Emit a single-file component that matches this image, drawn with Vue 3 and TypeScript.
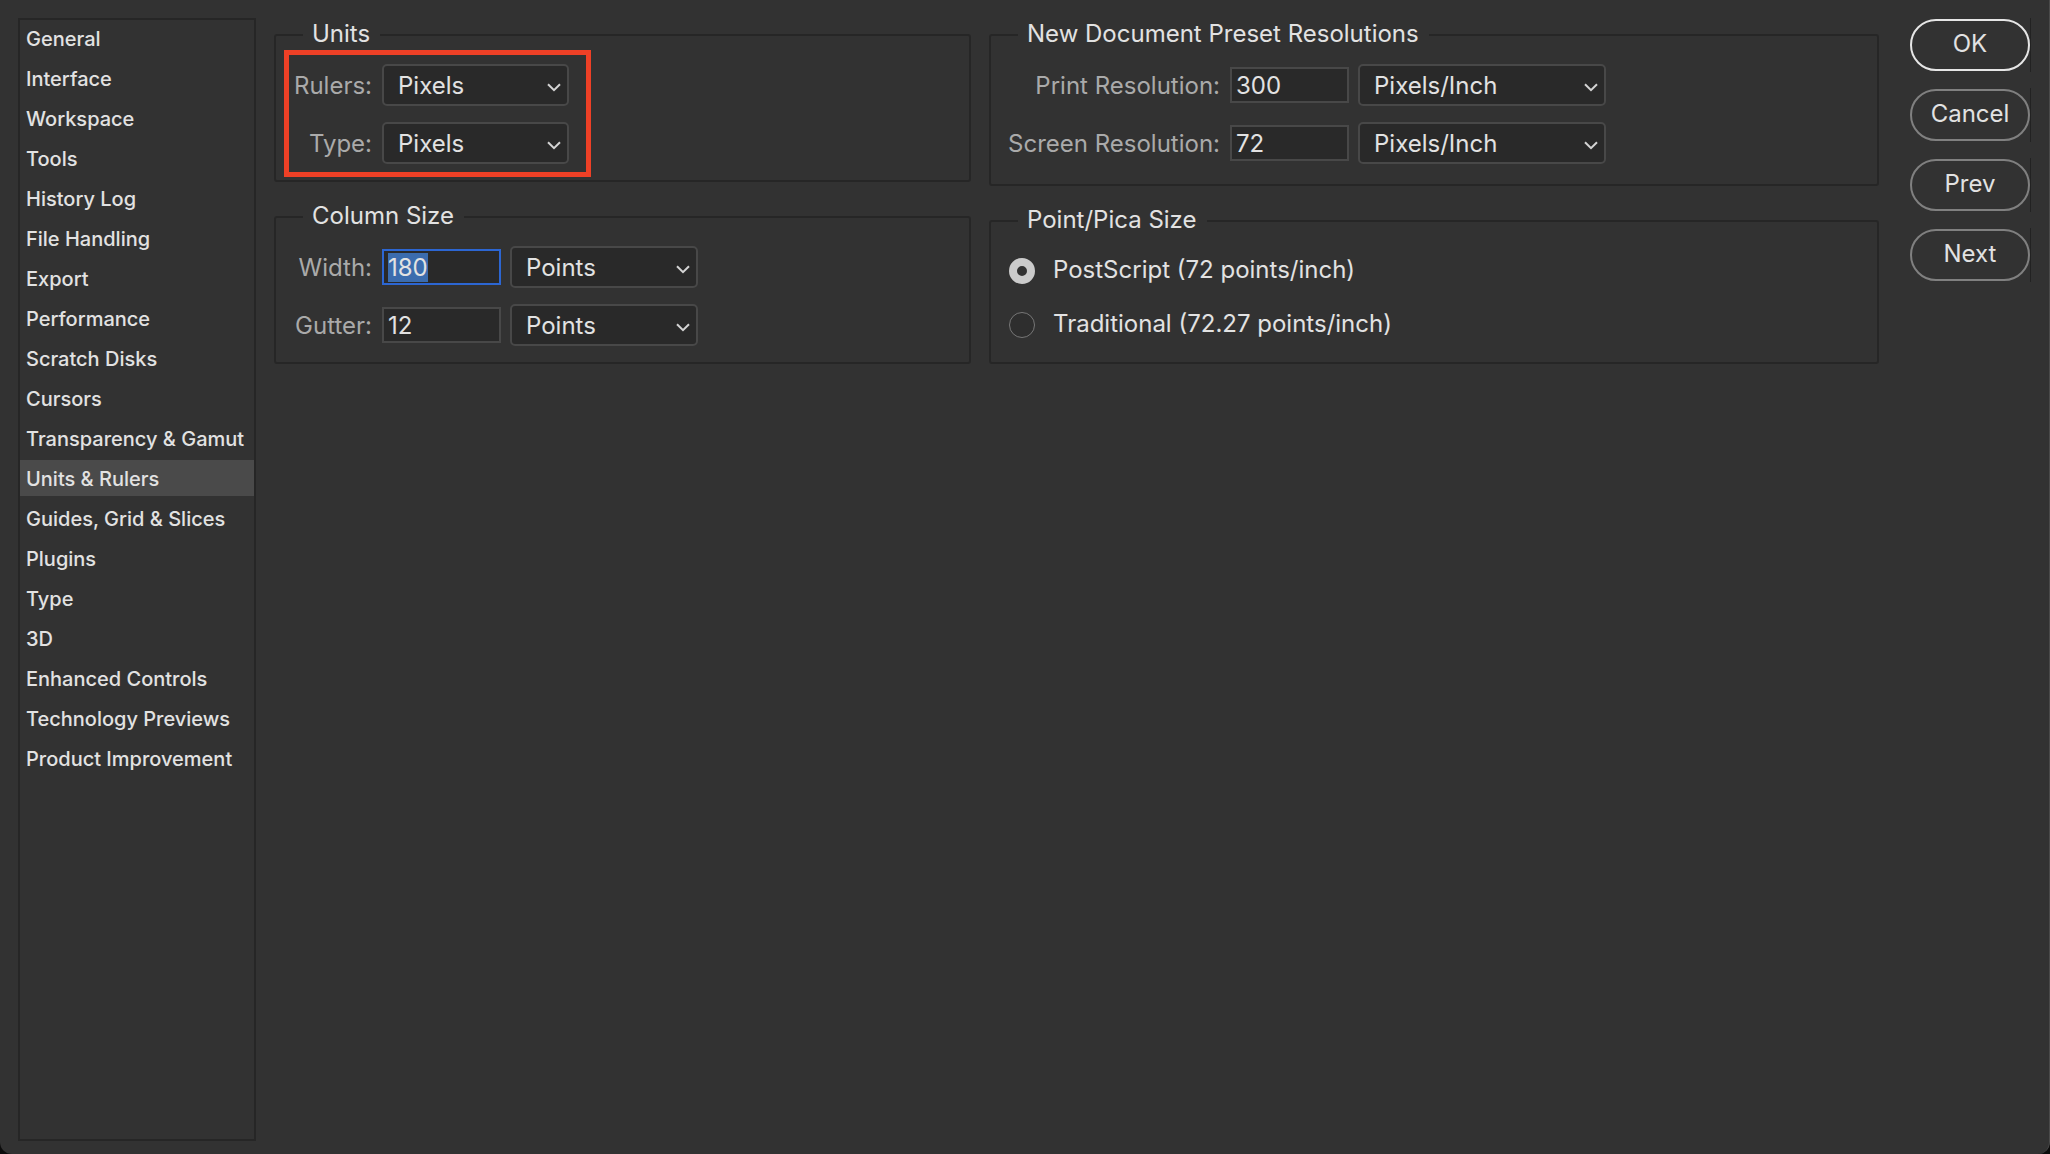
<script setup lang="ts">
import { onMounted, ref } from 'vue'

interface UnitField {
  id: string
  label: string
  value?: string
  unit: string
  options: string[]
}

const sections: string[] = [
  'General',
  'Interface',
  'Workspace',
  'Tools',
  'History Log',
  'File Handling',
  'Export',
  'Performance',
  'Scratch Disks',
  'Cursors',
  'Transparency & Gamut',
  'Units & Rulers',
  'Guides, Grid & Slices',
  'Plugins',
  'Type',
  '3D',
  'Enhanced Controls',
  'Technology Previews',
  'Product Improvement',
]
const activeSection = ref('Units & Rulers')

const lengths = ['Pixels', 'Inches', 'Points', 'Picas']
const densities = ['Pixels/Inch', 'Pixels/cm']

const units = ref<UnitField[]>([
  { id: 'rulers', label: 'Rulers:', unit: 'Pixels', options: lengths },
  { id: 'type', label: 'Type:', unit: 'Pixels', options: lengths },
])
const columns = ref<UnitField[]>([
  { id: 'width', label: 'Width:', value: '180', unit: 'Points', options: lengths },
  { id: 'gutter', label: 'Gutter:', value: '12', unit: 'Points', options: lengths },
])
const resolutions = ref<UnitField[]>([
  { id: 'print', label: 'Print Resolution:', value: '300', unit: 'Pixels/Inch', options: densities },
  { id: 'screen', label: 'Screen Resolution:', value: '72', unit: 'Pixels/Inch', options: densities },
])

const picaSizes = [
  { value: 'postscript', label: 'PostScript (72 points/inch)' },
  { value: 'traditional', label: 'Traditional (72.27 points/inch)' },
]
const pica = ref('postscript')

const actions = ['OK', 'Cancel', 'Prev', 'Next']

const form = ref<HTMLElement | null>(null)
onMounted(() => {
  const first = form.value?.querySelector<HTMLInputElement>('#width')
  first?.focus()
  first?.select()
})
</script>

<template>
  <div class="dialog">
    <nav class="sidebar">
      <a
        v-for="s in sections"
        :key="s"
        href="#"
        class="section"
        :class="{ active: s === activeSection }"
        @click.prevent="activeSection = s"
        >{{ s }}</a
      >
    </nav>

    <main ref="form" class="panels">
      <div class="column">
        <fieldset class="group units">
          <legend>Units</legend>
          <div class="rows">
            <div v-for="f in units" :key="f.id" class="row">
              <label class="name" :for="f.id">{{ f.label }}</label>
              <span class="picker">
                <select :id="f.id" v-model="f.unit">
                  <option v-for="o in f.options" :key="o">{{ o }}</option>
                </select>
                <svg class="chevron" viewBox="0 0 14 9"><path d="M1 1.2 7 7.2 13 1.2" /></svg>
              </span>
            </div>
          </div>
          <div class="highlight"></div>
        </fieldset>

        <fieldset class="group">
          <legend>Column Size</legend>
          <div class="rows">
            <div v-for="f in columns" :key="f.id" class="row">
              <label class="name" :for="f.id">{{ f.label }}</label>
              <input :id="f.id" v-model="f.value" class="number" type="text" />
              <span class="picker">
                <select v-model="f.unit" :aria-label="f.label">
                  <option v-for="o in f.options" :key="o">{{ o }}</option>
                </select>
                <svg class="chevron" viewBox="0 0 14 9"><path d="M1 1.2 7 7.2 13 1.2" /></svg>
              </span>
            </div>
          </div>
        </fieldset>
      </div>

      <div class="column">
        <fieldset class="group wide">
          <legend>New Document Preset Resolutions</legend>
          <div class="rows">
            <div v-for="f in resolutions" :key="f.id" class="row">
              <label class="name" :for="f.id">{{ f.label }}</label>
              <input :id="f.id" v-model="f.value" class="number" type="text" />
              <span class="picker">
                <select v-model="f.unit" :aria-label="f.label">
                  <option v-for="o in f.options" :key="o">{{ o }}</option>
                </select>
                <svg class="chevron" viewBox="0 0 14 9"><path d="M1 1.2 7 7.2 13 1.2" /></svg>
              </span>
            </div>
          </div>
        </fieldset>

        <fieldset class="group">
          <legend>Point/Pica Size</legend>
          <div class="choices">
            <label v-for="p in picaSizes" :key="p.value" class="choice">
              <input v-model="pica" type="radio" name="pica" :value="p.value" />
              <span>{{ p.label }}</span>
            </label>
          </div>
        </fieldset>
      </div>
    </main>

    <div class="actions">
      <div v-for="a in actions" :key="a" class="slot">
        <button type="button" :class="{ primary: a === 'OK' }">{{ a }}</button>
      </div>
    </div>
  </div>
</template>

<style>
html,
body {
  background: #0c0c0c;
}
</style>

<style scoped>
.dialog,
.dialog * {
  box-sizing: border-box;
}
.dialog {
  display: flex;
  min-height: 100vh;
  padding: 18px 18px 13px;
  background: #323232;
  border-right: 1px solid #4a4a4a;
  border-radius: 0 0 12px 12px;
  color: #e2e2e2;
  font-family: Inter, 'Liberation Sans', sans-serif;
  font-size: 24px;
  line-height: 32px;
}

.sidebar {
  display: flex;
  flex: none;
  flex-direction: column;
  gap: 4px;
  width: 238px;
  border: 2px solid #262626;
}
.section {
  padding: 2px 0 0 6px;
  color: inherit;
  font-size: 20px;
  font-weight: 500;
  line-height: 34px;
  text-decoration: none;
  white-space: nowrap;
}
.section.active {
  background: #4a4a4a;
}

.panels {
  display: grid;
  flex: 1;
  grid-template-columns: 697fr 890fr;
  align-items: start;
  gap: 18px;
  margin: 1px 31px 0 18px;
}
.column {
  display: flex;
  flex-direction: column;
  gap: 19px;
  min-width: 0;
}
.group {
  position: relative;
  min-width: 0;
  margin: 0;
  padding: 13px 18px 16px;
  border: 2px solid #262626;
  border-radius: 3px;
}
.group.wide {
  padding-bottom: 20px;
}
legend {
  margin-left: 9px;
  padding: 0 10px 2px 9px;
  line-height: 30px;
}
.rows {
  display: flex;
  flex-direction: column;
  gap: 16px;
}
.row {
  display: flex;
  align-items: center;
  height: 42px;
}
.name {
  width: 78px;
  margin-right: 10px;
  padding-top: 2px;
  color: #aaa;
  white-space: nowrap;
  display: flex;
  justify-content: flex-end;
}
.wide .name {
  width: 211px;
}
.number {
  width: 119px;
  height: 36px;
  margin-right: 9px;
  padding: 0 4px;
  background: #292929;
  border: 2px solid #484848;
  border-radius: 0;
  color: inherit;
  font: inherit;
  line-height: 30px;
  outline: none;
}
.number:focus {
  border-color: #2c66d2;
}
.number::selection {
  background: #3b6cae;
  color: #e2e2e2;
}
.picker {
  position: relative;
  width: 188px;
  height: 42px;
}
.units .picker {
  width: 187px;
}
.wide .picker {
  width: 248px;
}
select {
  width: 100%;
  height: 100%;
  padding: 2px 30px 0 14px;
  appearance: none;
  background: #292929;
  border: 2px solid #484848;
  border-radius: 5px;
  color: inherit;
  font: inherit;
  outline: none;
}
.chevron {
  position: absolute;
  top: 19px;
  right: 8px;
  width: 14px;
  height: 9px;
  fill: none;
  stroke: #d4d4d4;
  stroke-width: 2;
  pointer-events: none;
}
.highlight {
  position: absolute;
  top: -1px;
  left: 8px;
  width: 307px;
  height: 127px;
  border: 5px solid #ee4026;
  pointer-events: none;
}

.choices {
  display: flex;
  flex-direction: column;
  gap: 12px;
}
.choice {
  display: flex;
  align-items: center;
  gap: 18px;
  height: 42px;
}
.choice span {
  padding-bottom: 3px;
}
.choice input {
  width: 26px;
  height: 26px;
  margin: 0;
  appearance: none;
  background: #2e2e2e;
  border: 1px solid #777;
  border-radius: 50%;
}
.choice input:checked {
  background: #323232;
  border: 8px solid #cbcbcb;
}

.actions {
  display: flex;
  flex: none;
  flex-direction: column;
  gap: 16px;
}
.slot {
  display: flex;
  align-items: center;
  height: 54px;
  border-right: 1px solid #222;
}
button {
  width: 120px;
  height: 52px;
  padding: 0 0 2px;
  background: transparent;
  border: 2px solid #808080;
  border-radius: 26px;
  color: inherit;
  font: inherit;
}
button.primary {
  border-color: #e6e6e6;
}
</style>
